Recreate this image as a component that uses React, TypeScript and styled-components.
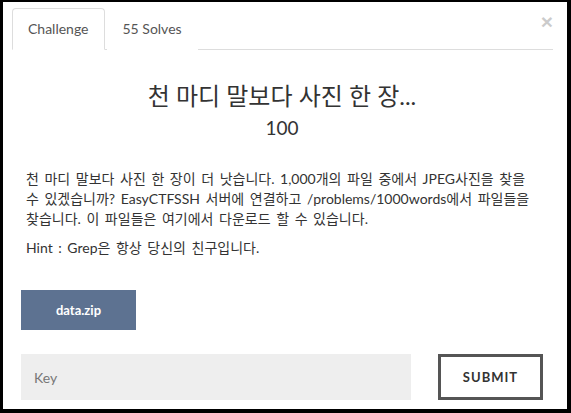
import React, { useState } from 'react'
import styled, { createGlobalStyle } from 'styled-components'

const GlobalStyle = createGlobalStyle`
  html, body {
    margin: 0;
    padding: 0;
    background: #000;
  }
  body {
    font-family: Lato, "Noto Sans CJK KR", sans-serif;
    font-size: 14px;
    line-height: 20px;
    color: #333;
  }
  * { box-sizing: border-box; }
`

const Modal = styled.div`
  position: relative;
  margin: 2px 4px 4px 3px;
  height: 407px;
  background: #fff;
  display: flex;
  flex-direction: column;
`

const Header = styled.div`
  padding: 6px 14px 0 9px;
`

const Tabs = styled.ul`
  display: flex;
  list-style: none;
  margin: 0;
  padding: 0;
  border-bottom: 1px solid #ddd;
`

const Tab = styled.li<{ $active?: boolean }>`
  margin-right: 2px;
  margin-bottom: -1px;
  padding: 10px 15px;
  line-height: 20px;
  color: #555;
  border: 1px solid ${p => (p.$active ? '#ddd' : 'transparent')};
  border-bottom-color: ${p => (p.$active ? '#fff' : 'transparent')};
  border-radius: 4px 4px 0 0;
  background: #fff;
  cursor: pointer;
`

const Close = styled.button`
  position: absolute;
  top: 9px;
  right: 14px;
  padding: 0;
  border: 0;
  background: none;
  font-family: "Liberation Sans", sans-serif;
  font-size: 21px;
  font-weight: bold;
  line-height: 1;
  color: #000;
  opacity: 0.2;
  cursor: pointer;
`

const Body = styled.div`
  padding: 31px 32px 0 23px;
  display: flex;
  flex-direction: column;
`

const Title = styled.h2`
  margin: 0 2px 0 5px;
  text-align: center;
  font-size: 24px;
  line-height: 30px;
  font-weight: 400;
  color: #333;
`

const Points = styled.h3`
  margin: 5px 2px 0 5px;
  text-align: center;
  font-size: 19px;
  line-height: 24px;
  font-weight: 400;
  color: #333;
`

const Description = styled.div`
  margin-top: 29px;
  word-break: keep-all;
  word-spacing: 2px;
  line-height: 20px;
  p {
    margin: 0 0 9px;
  }
`

const FileButton = styled.a`
  display: inline-flex;
  align-items: center;
  justify-content: center;
  align-self: flex-start;
  width: 115px;
  height: 40px;
  margin: 23px 0 0 -5px;
  background: #5d7291;
  color: #fff;
  font-size: 13px;
  font-weight: 700;
  text-decoration: none;
`

const SubmitRow = styled.form`
  display: flex;
  align-items: center;
  gap: 27px;
  margin: 24px 0 0 -5px;
`

const KeyInput = styled.input`
  flex: none;
  width: 390px;
  height: 46px;
  padding: 0 13px;
  border: 0;
  background: #eee;
  font-family: Lato, "Noto Sans CJK KR", sans-serif;
  font-size: 14px;
  color: #333;
  outline: none;
  &::placeholder {
    color: #777;
  }
`

const SubmitButton = styled.button`
  flex: none;
  width: 105px;
  height: 46px;
  border: 3px solid #555;
  background: #fff;
  font-family: Lato, sans-serif;
  font-size: 13px;
  font-weight: 700;
  letter-spacing: 1px;
  color: #333;
  cursor: pointer;
`

function App() {
  const [tab, setTab] = useState('challenge')
  const [key, setKey] = useState('')

  return (
    <>
      <GlobalStyle />
      <Modal>
        <Header>
          <Tabs>
            <Tab $active={tab === 'challenge'} onClick={() => setTab('challenge')}>Challenge</Tab>
            <Tab $active={tab === 'solves'} onClick={() => setTab('solves')}>55 Solves</Tab>
          </Tabs>
        </Header>
        <Close aria-label="Close">×</Close>
        <Body>
          <Title>천 마디 말보다 사진 한 장...</Title>
          <Points>100</Points>
          <Description>
            <p>
              천 마디 말보다 사진 한 장이 더 낫습니다. 1,000개의 파일 중에서 JPEG사진을 찾을 수 있겠습니까? EasyCTFSSH 서버에 연결하고 /problems/1000words에서 파일들을 찾습니다. 이 파일들은 여기에서 다운로드 할 수 있습니다.
            </p>
            <p>Hint : Grep은 항상 당신의 친구입니다.</p>
          </Description>
          <FileButton href="#">data.zip</FileButton>
          <SubmitRow onSubmit={e => e.preventDefault()}>
            <KeyInput placeholder="Key" value={key} onChange={e => setKey(e.target.value)} />
            <SubmitButton type="submit">SUBMIT</SubmitButton>
          </SubmitRow>
        </Body>
      </Modal>
    </>
  )
}

export default App
